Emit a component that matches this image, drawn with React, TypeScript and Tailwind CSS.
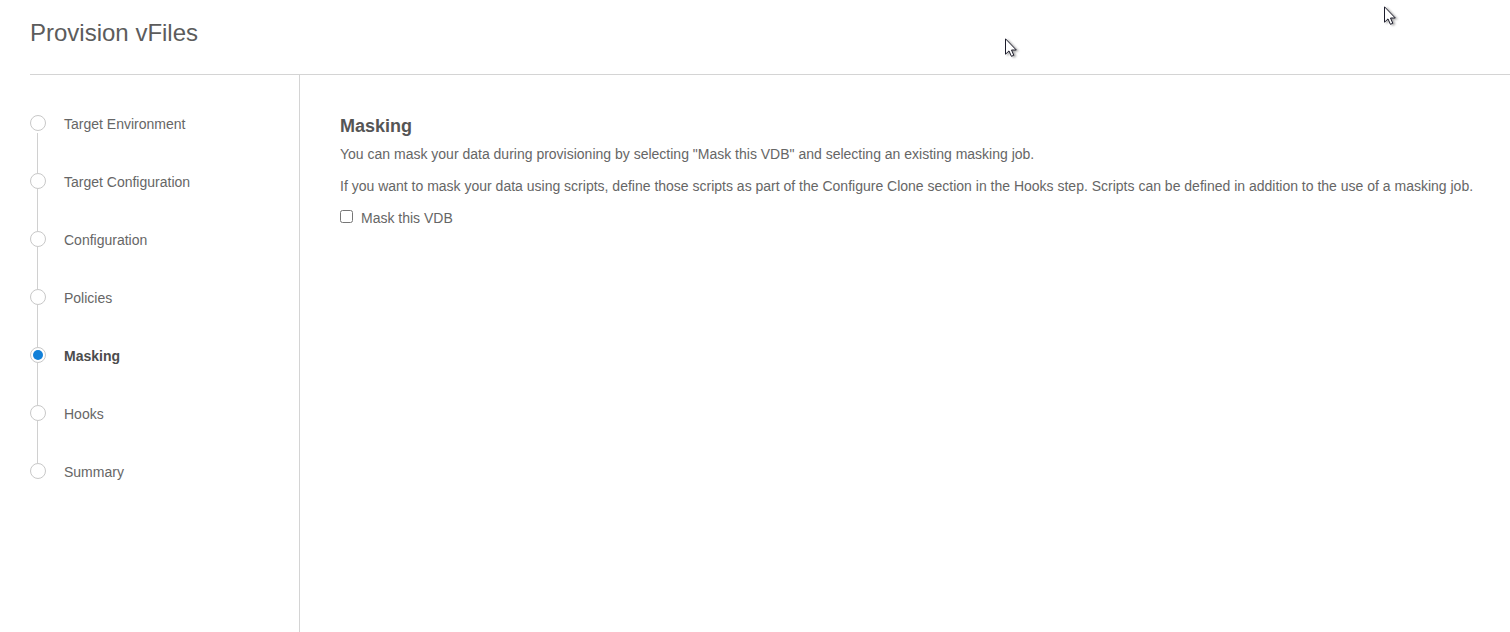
import React, { useState } from "react";

const steps = [
  "Target Environment",
  "Target Configuration",
  "Configuration",
  "Policies",
  "Masking",
  "Hooks",
  "Summary",
];

function Pointer({ className }: { className: string }) {
  return (
    <svg
      className={`pointer-events-none absolute drop-shadow-[2px_1px_1px_rgba(0,0,0,0.35)] ${className}`}
      width="12"
      height="19"
      viewBox="0 0 12 19"
      aria-hidden="true"
    >
      <path
        d="M.5 .8V16.2L4 12.9L6.4 18.3L8.8 17.3L6.5 12H11.3Z"
        fill="#fff"
        stroke="#1c1c2b"
        strokeWidth="1"
      />
    </svg>
  );
}

function Step({
  label,
  active,
  first,
  last,
  onSelect,
}: {
  label: string;
  active: boolean;
  first: boolean;
  last: boolean;
  onSelect: () => void;
}) {
  return (
    <li className="flex h-[58px] items-stretch gap-[18px]">
      <div className="flex w-4 flex-col">
        <span className="flex h-4 w-4 shrink-0 items-center justify-center rounded-full border border-[#c8c8c8] bg-white">
          {active && <span className="h-2.5 w-2.5 rounded-full bg-[#1280d8]" />}
        </span>
        {!last && (
          <span className={`ml-[7px] w-px grow bg-[#d0d0d0] ${first ? "mt-0.5" : ""}`} />
        )}
      </div>
      <button
        type="button"
        onClick={onSelect}
        aria-current={active ? "step" : undefined}
        className={`mt-px self-start text-left text-sm leading-4 ${active ? "font-bold text-[#4c4c4c]" : ""}`}
      >
        {label}
      </button>
    </li>
  );
}

export default function App() {
  const [current, setCurrent] = useState("Masking");
  const [masked, setMasked] = useState(false);

  return (
    <div className="relative flex min-h-screen flex-col bg-white pl-[30px] font-['Liberation_Sans',Arial,sans-serif] text-sm text-[#666666]">
      <header className="border-b border-[#d4d4d4] pt-[18px] pb-[26px]">
        <h1 className="text-2xl leading-[30px] text-[#5c5c5c]">Provision vFiles</h1>
      </header>
      <div className="flex grow">
        <nav
          aria-label="Provisioning steps"
          className="w-[270px] shrink-0 border-r border-[#d4d4d4] pt-10"
        >
          <ol>
            {steps.map((label, i) => (
              <Step
                key={label}
                label={label}
                active={label === current}
                first={i === 0}
                last={i === steps.length - 1}
                onSelect={() => setCurrent(label)}
              />
            ))}
          </ol>
        </nav>
        <main className="min-w-0 grow pt-10 pl-10">
          <h2 className="text-lg leading-[22px] font-bold text-[#555555]">Masking</h2>
          <p className="mt-[7px] leading-5">
            You can mask your data during provisioning by selecting "Mask this VDB" and selecting an
            existing masking job.
          </p>
          <p className="mt-3 leading-5">
            If you want to mask your data using scripts, define those scripts as part of the
            Configure Clone section in the Hooks step. Scripts can be defined in addition to the use
            of a masking job.
          </p>
          <div className="mt-3 flex items-start">
            <input
              id="mask-vdb"
              type="checkbox"
              checked={masked}
              onChange={(e) => setMasked(e.target.checked)}
              className="mt-0.5 h-[13px] w-[13px]"
            />
            <label htmlFor="mask-vdb" className="pl-2 leading-5">
              Mask this VDB
            </label>
          </div>
        </main>
      </div>
      <Pointer className="top-[38px] left-[1005px]" />
      <Pointer className="top-[6px] left-[1384px]" />
    </div>
  );
}
